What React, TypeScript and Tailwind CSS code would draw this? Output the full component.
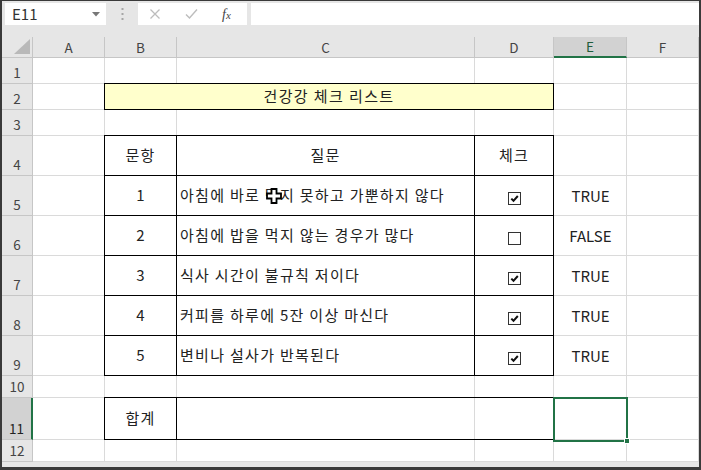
import type { ReactNode } from "react";

const COLS = [
  "col-start-1",
  "col-start-2",
  "col-start-3",
  "col-start-4",
  "col-start-5",
  "col-start-6",
  "col-start-7",
];
const ROWS = [
  "row-start-1",
  "row-start-2",
  "row-start-3",
  "row-start-4",
  "row-start-5",
  "row-start-6",
  "row-start-7",
  "row-start-8",
  "row-start-9",
  "row-start-10",
  "row-start-11",
  "row-start-12",
  "row-start-13",
];

const LETTERS = ["A", "B", "C", "D", "E", "F"];

const ITEMS = [
  { no: 1, text: "아침에 바로 먹지 못하고 가뿐하지 않다", checked: true },
  { no: 2, text: "아침에 밥을 먹지 않는 경우가 많다", checked: false },
  { no: 3, text: "식사 시간이 불규칙 저이다", checked: true },
  { no: 4, text: "커피를 하루에 5잔 이상 마신다", checked: true },
  { no: 5, text: "변비나 설사가 반복된다", checked: true },
];

function CheckBox({ checked }: { checked: boolean }) {
  return (
    <span className="flex h-[13px] w-[13px] items-center justify-center border border-[#333] bg-white">
      {checked && (
        <svg width="9" height="9" viewBox="0 0 9 9">
          <path d="M1.3 4.6 L3.5 6.8 L7.8 2" stroke="#111" strokeWidth="2" fill="none" />
        </svg>
      )}
    </span>
  );
}

function Cell({ className, children }: { className: string; children?: ReactNode }) {
  return <div className={`flex items-center ${className}`}>{children}</div>;
}

export default function App() {
  const grid: ReactNode[] = [];

  // column headers
  grid.push(
    <div
      key="corner"
      className={`${COLS[0]} ${ROWS[0]} relative border-r border-b border-[#c6c6c6]`}
    >
      <svg className="absolute right-[2px] bottom-[3px]" width="16" height="15" viewBox="0 0 16 15">
        <polygon points="16,0 16,15 0,15" fill="#b9b9b9" />
      </svg>
    </div>,
  );
  LETTERS.forEach((l, i) => {
    const sel = l === "E";
    grid.push(
      <div
        key={`h${l}`}
        className={`${COLS[i + 1]} ${ROWS[0]} flex items-center justify-center border-r border-[#c6c6c6] text-[13.5px] ${
          sel
            ? "bg-[#d2d2d2] border-b-2 border-b-[#217346] text-[#1e5c3a]"
            : "border-b border-b-[#c6c6c6] text-[#444]"
        }`}
      >
        {l}
      </div>,
    );
  });

  // row headers and gridlines
  for (let r = 1; r <= 12; r++) {
    const sel = r === 11;
    grid.push(
      <div
        key={`r${r}`}
        className={`${COLS[0]} ${ROWS[r]} flex items-end justify-center border-b border-[#c6c6c6] pb-[2px] text-[13.5px] leading-[17px] ${
          sel ? "bg-[#d2d2d2] border-r-2 border-r-[#217346] text-[#222]" : "border-r text-[#444]"
        }`}
      >
        {r}
      </div>,
    );
    for (let c = 1; c <= 6; c++) {
      grid.push(
        <div
          key={`g${r}-${c}`}
          className={`${COLS[c]} ${ROWS[r]} border-r border-b border-[#dadada] bg-white`}
        />,
      );
    }
  }

  // title
  grid.push(
    <Cell
      key="title"
      className={`${COLS[2]} ${ROWS[2]} col-span-3 -mt-px -ml-px justify-center border border-black bg-[#ffffcc] tracking-[1.4px]`}
    >
      건강강 체크 리스트
    </Cell>,
  );

  // table header
  grid.push(
    <Cell key="th1" className={`${COLS[2]} ${ROWS[4]} -mt-px -ml-px justify-center border border-black bg-white tracking-[1.3px]`}>
      문항
    </Cell>,
    <Cell key="th2" className={`${COLS[3]} ${ROWS[4]} -mt-px -ml-px justify-center border border-black bg-white tracking-[1.3px]`}>
      질문
    </Cell>,
    <Cell key="th3" className={`${COLS[4]} ${ROWS[4]} -mt-px -ml-px justify-center border border-black bg-white tracking-[1.3px]`}>
      체크
    </Cell>,
  );

  ITEMS.forEach((it, i) => {
    const row = ROWS[5 + i];
    grid.push(
      <Cell key={`n${i}`} className={`${COLS[2]} ${row} -mt-px -ml-px justify-center border border-black bg-white`}>
        {it.no}
      </Cell>,
      <Cell key={`q${i}`} className={`${COLS[3]} ${row} -mt-px -ml-px border border-black bg-white pl-[3px] whitespace-nowrap tracking-[1.3px]`}>
        {it.text}
      </Cell>,
      <Cell key={`c${i}`} className={`${COLS[4]} ${row} -mt-px -ml-px justify-center border border-black bg-white pt-[5px]`}>
        <CheckBox checked={it.checked} />
      </Cell>,
      <Cell key={`v${i}`} className={`${COLS[5]} ${row} justify-center`}>
        {it.checked ? "TRUE" : "FALSE"}
      </Cell>,
    );
  });

  // total row
  grid.push(
    <Cell key="sum" className={`${COLS[2]} ${ROWS[11]} -mt-px -ml-px justify-center border border-black bg-white tracking-[1.3px]`}>
      합계
    </Cell>,
    <div key="sumc" className={`${COLS[3]} ${ROWS[11]} -mt-px -ml-px border-t border-b border-black`} />,
    <div key="sumd" className={`${COLS[4]} ${ROWS[11]} -mt-px -ml-px border-t border-r border-b border-black`} />,
    <div
      key="sel"
      className={`${COLS[5]} ${ROWS[11]} relative -mt-px -ml-px -mr-px -mb-[2px] border-2 border-[#217346]`}
    >
      <span className="absolute -right-[4px] -bottom-[4px] h-[6px] w-[6px] border border-white bg-[#217346]" />
    </div>,
  );

  return (
    <div className="relative flex h-[470px] w-[701px] flex-col overflow-hidden border-x-2 border-t border-b-[3px] border-[#3a3a3a] bg-[#e6e6e6] font-['Noto_Sans_CJK_KR','Noto_Sans',sans-serif] text-[#222]">
      {/* formula bar */}
      <div className="flex h-[36px] shrink-0 items-start pt-[2px]">
        <div className="ml-[3px] flex h-[22px] w-[101px] items-center justify-between bg-white pl-[7px] pr-[6px] text-[15px] text-[#333]">
          <span>E11</span>
          <svg width="8" height="5" viewBox="0 0 8 5">
            <polygon points="0,0 8,0 4,4.5" fill="#777" />
          </svg>
        </div>
        <div className="flex h-[22px] w-[32px] items-center justify-center">
          <svg width="3" height="12" viewBox="0 0 3 12">
            <rect x="0.5" y="0" width="2" height="2" fill="#a6a6a6" />
            <rect x="0.5" y="5" width="2" height="2" fill="#a6a6a6" />
            <rect x="0.5" y="10" width="2" height="2" fill="#a6a6a6" />
          </svg>
        </div>
        <div className="flex h-[22px] w-[109px] items-center bg-white">
          <svg className="ml-[11px]" width="12" height="12" viewBox="0 0 12 12">
            <path d="M1.5 1.5 L10.5 10.5 M10.5 1.5 L1.5 10.5" stroke="#bdbdbd" strokeWidth="1.3" />
          </svg>
          <svg className="ml-[24px]" width="13" height="12" viewBox="0 0 13 12">
            <path d="M1 6.5 L4.5 10 L12 1.5" stroke="#bdbdbd" strokeWidth="1.4" fill="none" />
          </svg>
          <span className="ml-[24px] font-['Liberation_Serif',serif] text-[14px] italic text-[#444]">
            f<span className="text-[11px]">x</span>
          </span>
        </div>
        <div className="ml-[4px] h-[22px] flex-1 bg-white" />
      </div>

      {/* sheet */}
      <div className="grid shrink-0 grid-cols-[31px_72px_72px_298px_79px_73px_72px] grid-rows-[21px_26px_26px_26px_40px_40px_40px_40px_40px_40px_22px_42px_22px] text-[15px]">
        {grid}
      </div>

      {/* mouse cursor */}
      <svg className="absolute left-[264px] top-[187px]" width="16" height="16" viewBox="0 0 16 16">
        <polygon
          points="5.5,1 10.5,1 10.5,5.5 15,5.5 15,10.5 10.5,10.5 10.5,15 5.5,15 5.5,10.5 1,10.5 1,5.5 5.5,5.5"
          fill="#fff"
          stroke="#000"
          strokeWidth="1.8"
        />
      </svg>
    </div>
  );
}
